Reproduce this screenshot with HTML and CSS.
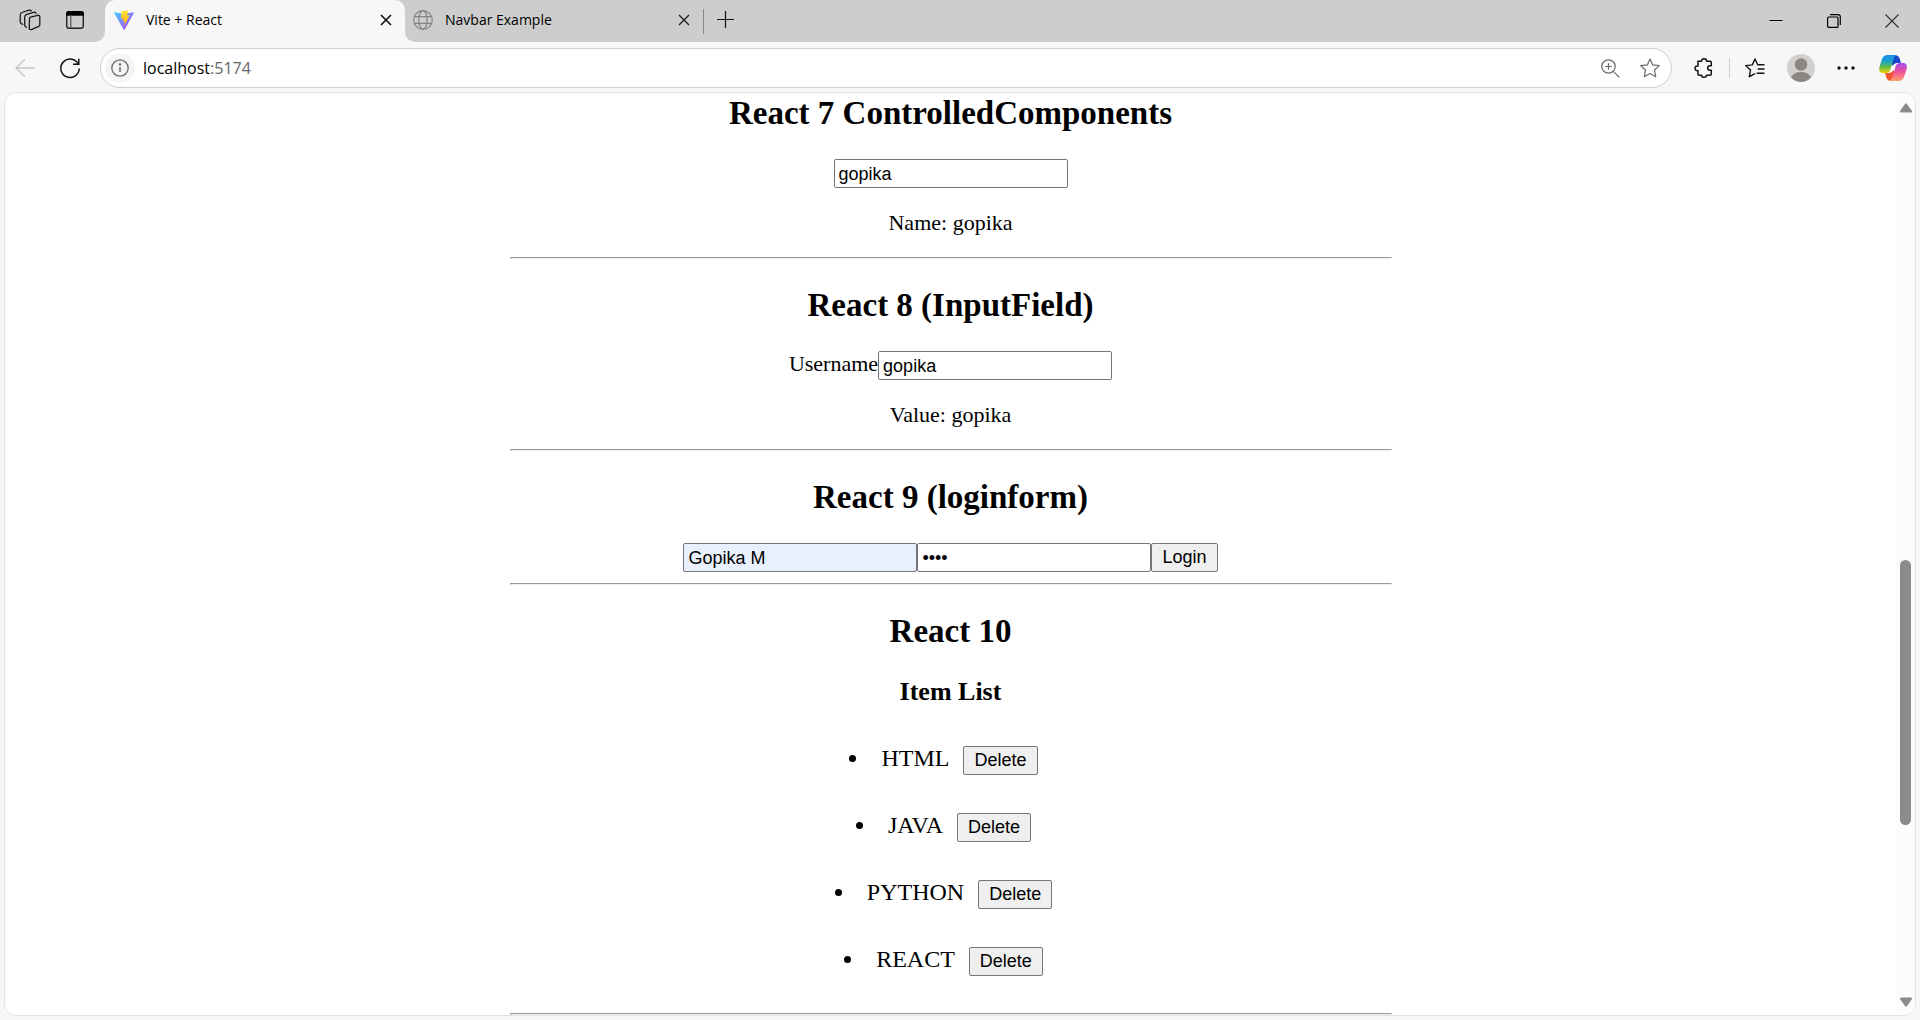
FILE: index.html
```html
<!DOCTYPE html>
<html lang="en">
<head>
<meta charset="utf-8">
<title>Vite + React</title>
<link rel="stylesheet" href="styles.css">
</head>
<body>
<header class="tabbar">
  <div class="tabbar-tools">
    <button class="icon-btn" aria-label="Workspaces">
      <svg width="22" height="22" viewBox="0 0 22 22" fill="none" stroke="#1b1b1b" stroke-width="1.3" stroke-linejoin="round" stroke-linecap="round"><path d="M10.5 9.6Q10.4 8.5 11.5 8.1L18.8 6.3Q20.7 6 20.8 7.5V15.5Q20.8 16.8 19.8 17.3L12.3 20.6Q10.3 21 10.3 19.4Z"/><path d="M7.6 18.2Q5.7 17.8 5.7 16.2V8Q5.7 6.3 7.2 5.6L15.2 3.2Q16.8 3 17 4.3"/><path d="M3.8 15.4Q1.2 14.6 1.2 12.8V6Q1.3 4.2 2.8 3.5L10 1.2Q11.8 .8 12.2 2"/></svg>
    </button>
    <button class="icon-btn" aria-label="Tab actions">
      <svg width="20" height="20" viewBox="0 0 20 20"><rect x="1.7" y="1.7" width="16.6" height="16.6" rx="2.6" fill="none" stroke="#222" stroke-width="1.4"/><path d="M1 5.8V4Q1 1 4 1H16Q19 1 19 4V5.8Z" fill="#000"/><path d="M5.8 5V18" stroke="#555" stroke-width="1.2"/></svg>
    </button>
  </div>
  <div class="tab tab-active">
    <svg width="20" height="20" viewBox="0 0 32 32"><defs><linearGradient id="v1" x1="0" y1="0" x2="1" y2="1"><stop offset="0" stop-color="#41d1ff"/><stop offset="1" stop-color="#bd34fe"/></linearGradient><linearGradient id="v2" x1="0" y1="0" x2="0" y2="1"><stop offset="0" stop-color="#ffea83"/><stop offset=".1" stop-color="#ffdd35"/><stop offset="1" stop-color="#ffa800"/></linearGradient></defs><path d="M31.8 4.8 16.9 31.4Q16.3 32.2 15.6 31.4L.3 4.8Q-.1 3.6 1.2 3.6L16 6.3 30.9 3.6Q32.1 3.6 31.8 4.8Z" fill="url(#v1)"/><path d="M23 .1 12 2.2 11.3 14.1 14.6 13.7Q15.3 13.7 15.2 14.4L14.3 18.9 17 18.2Q17.6 18.2 17.5 18.9L16 26.3 24.9 8.6Q25.1 8 24.3 8L20.9 8.6 23.1 .8Z" fill="url(#v2)"/></svg>
    <span class="tab-title">Vite + React</span>
    <button class="icon-btn" aria-label="Close tab"><svg width="12" height="12" viewBox="0 0 12 12" stroke="#111" stroke-width="1.6"><path d="M1 1 11 11M11 1 1 11"/></svg></button>
  </div>
  <div class="tab">
    <svg width="20" height="20" viewBox="0 0 20 20" fill="none" stroke="#838383" stroke-width="1.2"><circle cx="10" cy="10" r="9.3"/><ellipse cx="10" cy="10" rx="4.2" ry="9.3"/><path d="M1.5 6.7H18.5M1.5 13.3H18.5"/></svg>
    <span class="tab-title">Navbar Example</span>
    <button class="icon-btn" aria-label="Close tab"><svg width="12" height="12" viewBox="0 0 12 12" stroke="#222" stroke-width="1.4"><path d="M1 1 11 11M11 1 1 11"/></svg></button>
  </div>
  <span class="tab-divider"></span>
  <button class="icon-btn new-tab" aria-label="New tab"><svg width="17" height="17" viewBox="0 0 17 17" stroke="#111" stroke-width="1.2"><path d="M0 8.500H17M8.500 0V17"/></svg></button>
  <div class="window-controls">
    <button class="icon-btn" aria-label="Minimize"><svg width="14" height="14" viewBox="0 0 14 14" stroke="#000"><path d="M.5 6.500H13.500"/></svg></button>
    <button class="icon-btn" aria-label="Restore"><svg width="14" height="14" viewBox="0 0 14 14" fill="none" stroke="#000" stroke-width="1.200"><rect x=".6" y="3" width="10.400" height="10.400" rx="1"/><path d="M3 .7H11Q13.300 .7 13.300 3V11"/></svg></button>
    <button class="icon-btn" aria-label="Close"><svg width="14" height="14" viewBox="0 0 14 14" stroke="#333" stroke-width="1.200"><path d="M.5 .5 13.500 13.500M13.500 .5 .5 13.500"/></svg></button>
  </div>
</header>

<nav class="toolbar">
  <button class="icon-btn" aria-label="Back" disabled><svg width="20" height="20" viewBox="0 0 20 20" fill="none" stroke="#c6c6c6" stroke-width="1.300"><path d="M20 10H1M10 1.200 1 10 10 18.800"/></svg></button>
  <button class="icon-btn refresh" aria-label="Refresh"><svg width="20" height="20" viewBox="0 0 20 20" fill="none" stroke="#111" stroke-width="1.500"><path d="M18.600 7A9.200 9.200 0 1 0 19.200 10.500M18.800 .8V6.300H13"/></svg></button>
  <div class="address">
    <button class="icon-btn site-info" aria-label="Site information"><svg width="18" height="18" viewBox="0 0 18 18" fill="none" stroke="#6a6a6a" stroke-width="1.300"><circle cx="9" cy="9" r="8.200"/><path d="M9 8V13" stroke-width="1.500"/><circle cx="9" cy="5.500" r=".6"/></svg></button>
    <a class="url" href="#">localhost<span class="port">:5174</span></a>
    <button class="icon-btn" aria-label="Zoom"><svg width="19" height="19" viewBox="0 0 19 19" fill="none" stroke="#6a6a6a" stroke-width="1.200"><circle cx="7.500" cy="7.500" r="6.700"/><path d="M12.300 12.300 18.300 18.300M7.500 4.200V10.800M4.200 7.500H10.800"/></svg></button>
    <button class="icon-btn" aria-label="Add to favorites"><svg width="20" height="20" viewBox="0 0 20 20" fill="none" stroke="#6a6a6a" stroke-width="1.200" stroke-linejoin="round"><path d="M10 1 12.700 6.900 19.300 7.600 14.500 12 15.700 18.700 10 15.500 4.300 18.700 5.500 12 .7 7.600 7.300 6.900Z"/></svg></button>
  </div>
  <button class="icon-btn" aria-label="Extensions"><svg width="20" height="20" viewBox="0 0 20 20" fill="none" stroke="#111" stroke-width="1.500" stroke-linejoin="round"><path d="M4 3.300H7.500Q7.400 .8 10 .8T12.600 3.300H16Q17.300 3.300 17.300 4.500V7.700H15.800Q13.700 7.900 13.700 10T15.800 12.200H17.300V16Q17.300 17.200 16 17.200H12.600Q12.400 19.300 10 19.300T7.500 17.200H5Q4 17.200 4 16V12.700Q1 12.900 1 10.300T4 7.900Z"/></svg></button>
  <span class="toolbar-divider"></span>
  <button class="icon-btn" aria-label="Favorites"><svg width="20" height="20" viewBox="0 0 20 20" fill="none" stroke="#111" stroke-width="1.400" stroke-linejoin="round"><path d="M19.500 6.800H12.700L10 1 7.300 6.900 .7 7.600 5.500 12 4.300 18.700 10 15.600M12.700 11H19.500M11.500 15.200H19.500"/></svg></button>
  <button class="icon-btn" aria-label="Profile"><svg width="28" height="28" viewBox="0 0 28 28"><circle cx="14" cy="14" r="14" fill="#d2d0ce"/><circle cx="14" cy="10.500" r="6.200" fill="#8a8684"/><path d="M4 23.300Q7 18 14 18T24 23.300Q20 28 14 28T4 23.300Z" fill="#8a8684"/></svg></button>
  <button class="icon-btn" aria-label="Settings and more"><svg width="18" height="4" viewBox="0 0 18 4" fill="#111"><circle cx="2" cy="2" r="1.700"/><circle cx="9" cy="2" r="1.700"/><circle cx="16" cy="2" r="1.700"/></svg></button>
  <button class="icon-btn copilot" aria-label="Copilot"><svg width="28" height="26" viewBox="0 0 28 26"><defs><linearGradient id="c1" x1="0" y1="0" x2="0" y2="1"><stop offset="0" stop-color="#1b8bea"/><stop offset=".35" stop-color="#1aa3c8"/><stop offset=".65" stop-color="#5cba48"/><stop offset="1" stop-color="#f5d000"/></linearGradient><linearGradient id="c2" x1="0" y1="0" x2="0" y2="1"><stop offset="0" stop-color="#a64cf0"/><stop offset=".5" stop-color="#f0509a"/><stop offset="1" stop-color="#ffa16a"/></linearGradient></defs><path d="M11 8H17L11 18H10Z" fill="#fff"/><path d="M17 8 18 18 13 19 11 18Z" fill="#fff"/><path d="M13 0H16.500Q19.500 .3 20.500 3L22 8H17.500Q15 8.300 13.500 11L12 6Z" fill="#1748c8"/><path d="M15 26H11.500Q8.500 25.700 7.500 23L6 18H10.500Q13 17.700 14.500 15L16 20Z" fill="#f1562f"/><path d="M8.500 0H17.500Q15.200 1 14.300 4.500L11.500 14.500Q10.300 18 7 18H3.500Q-1 17.600 .4 12L3 4Q4.500 0 8.500 0Z" fill="url(#c1)"/><path d="M19.500 26H10.500Q12.800 25 13.700 21.500L16.500 11.500Q17.700 8 21 8H24.500Q29 8.400 27.600 14L25 22Q23.500 26 19.500 26Z" fill="url(#c2)"/></svg></button>
</nav>

<div class="viewport">
  <main class="page">
    <div class="root">
      <h2>React 7 ControlledComponents</h2>
      <div class="row"><input class="field" type="text" value="gopika" aria-label="Name"></div>
      <p>Name: gopika</p>
      <hr>
      <h2>React 8 (InputField)</h2>
      <div class="row"><label for="username">Username</label><input class="field" id="username" type="text" value="gopika"></div>
      <p>Value: gopika</p>
      <hr>
      <h2>React 9 (loginform)</h2>
      <form class="row"><input class="field autofilled" type="text" value="Gopika M" aria-label="User name"><input class="field" type="password" value="1234" aria-label="Password"><button class="btn" type="button">Login</button></form>
      <hr>
      <h2>React 10</h2>
      <h3>Item List</h3>
      <ul class="items">
        <li>HTML<button class="btn">Delete</button></li>
        <li>JAVA<button class="btn">Delete</button></li>
        <li>PYTHON<button class="btn">Delete</button></li>
        <li>REACT<button class="btn">Delete</button></li>
      </ul>
      <hr>
    </div>
  </main>
  <div class="scrollbar" aria-hidden="true">
    <svg width="12" height="10" viewBox="0 0 12 10" fill="#8b8b8b"><path d="M5 1Q6 -.3 7 1L12 8Q12.300 9.600 11 9.600H1Q-.3 9.600 0 8Z"/></svg>
    <div class="track"><div class="thumb"></div></div>
    <svg width="12" height="10" viewBox="0 0 12 10" fill="#8b8b8b"><path d="M5 9Q6 10.300 7 9L12 2Q12.300 .4 11 .4H1Q-.3 .4 0 2Z"/></svg>
  </div>
</div>
</body>
</html>
```
FILE: styles.css
```css
* { box-sizing: border-box; }

body {
  margin: 0;
  height: 100vh;
  display: flex;
  flex-direction: column;
  overflow: hidden;
  background: #f7f7f7;
  color: #000;
  font-family: "Liberation Serif", serif;
}

svg { display: block; overflow: visible; }

.icon-btn {
  display: flex;
  align-items: center;
  justify-content: center;
  padding: 0;
  border: 0;
  background: none;
}

/* Tab strip */
.tabbar {
  flex: none;
  display: flex;
  height: 42px;
  background: linear-gradient(90deg, #f7f7f7 450px, #cdcdcd 450px);
  font-family: "Open Sans", "Noto Sans", sans-serif;
  font-size: 14px;
}

.tabbar-tools {
  display: flex;
  gap: 24px;
  width: 105px;
  padding-left: 19px;
  padding-bottom: 2px;
  border-bottom-right-radius: 10px;
  background: #cdcdcd;
}

.tab {
  display: flex;
  align-items: center;
  gap: 12px;
  width: 298px;
  padding: 0 13px 2px 8px;
  border-bottom-left-radius: 10px;
  background: #cdcdcd;
}

.tab-active {
  width: 300px;
  padding: 0 13px 2px 9px;
  border-radius: 10px 10px 0 0;
  background: #f7f7f7;
  box-shadow: 0 -10px 0 #cdcdcd;
}

.tab-title {
  flex: 1;
  padding-bottom: 2px;
}

.tab-divider {
  align-self: center;
  width: 1px;
  height: 25px;
  margin-right: 13px;
  background: #888;
}

.new-tab { padding-bottom: 3px; }

.window-controls {
  display: flex;
  gap: 44px;
  margin-left: auto;
  padding-right: 21px;
}

/* Address row */
.toolbar {
  flex: none;
  display: flex;
  align-items: center;
  height: 50px;
  padding: 2px 13px 0 15px;
  gap: 22px;
}

.refresh { margin-left: 3px; }

.address {
  flex: 1;
  display: flex;
  align-items: center;
  gap: 20px;
  height: 40px;
  margin-left: -2px;
  padding: 0 11px 0 4px;
  border: 1px solid #cfcfcf;
  border-radius: 20px;
  background: #fff;
}

.site-info {
  width: 30px;
  height: 30px;
  border-radius: 50%;
  background: #f5f5f5;
}

.url {
  flex: 1;
  margin-left: -12px;
  color: #000;
  font: 16px "Open Sans", "Noto Sans", sans-serif;
  text-decoration: none;
}

.port { color: #666; }

.toolbar-divider {
  width: 1px;
  height: 20px;
  margin: 0 -7px;
  background: #ccc;
}

.copilot { margin-left: 2px; }

/* Page card */
.viewport {
  flex: 1;
  min-height: 0;
  display: flex;
  margin: 0 4px 4px;
  overflow: hidden;
  border: 1px solid #e3e3e3;
  border-radius: 12px;
  background: #fff;
}

.page {
  flex: 1;
  overflow: hidden;
  padding-top: 1px;
  font-size: 22px;
  line-height: 25px;
  text-align: center;
}

.root {
  max-width: 882px;
  margin: 0 auto;
}

h2 {
  margin: 27px 0;
  font-size: 33px;
  line-height: 38px;
}

.root > h2:first-child { margin-top: 0; }

h3 {
  margin: 27px 0;
  font-size: 26px;
  line-height: 30px;
}

p { margin: 22px 0; }

hr {
  margin: 11px 0;
  border: 1px solid;
  border-color: #9a9a9a #eee #eee #9a9a9a;
}

.row {
  display: flex;
  justify-content: center;
}

.field,
.btn {
  height: 29px;
  border: 1px solid #767676;
  border-radius: 2px;
  color: #000;
  font: 18px "Liberation Sans", sans-serif;
}

.field {
  width: 234px;
  padding: 4px 4px 2px;
  background: #fff;
}

.autofilled { background: #e8f0fe; }

.btn {
  padding: 0 10px;
  background: #efefef;
}

.items {
  margin: 0;
  padding: 0;
  list-style: disc inside;
  font-size: 24px;
}

.items li {
  height: 67px;
  padding: 12px 0;
}

.items .btn { margin: 0 14px; }

/* Scrollbar */
.scrollbar {
  display: flex;
  flex-direction: column;
  align-items: center;
  width: 19px;
  padding: 10px 0 8px;
  background: #fcfcfc;
}

.track {
  flex: 1;
  width: 11px;
  padding: 447px 0 0;
}

.thumb {
  height: 265px;
  border-radius: 6px;
  background: #8b8b8b;
}
```
